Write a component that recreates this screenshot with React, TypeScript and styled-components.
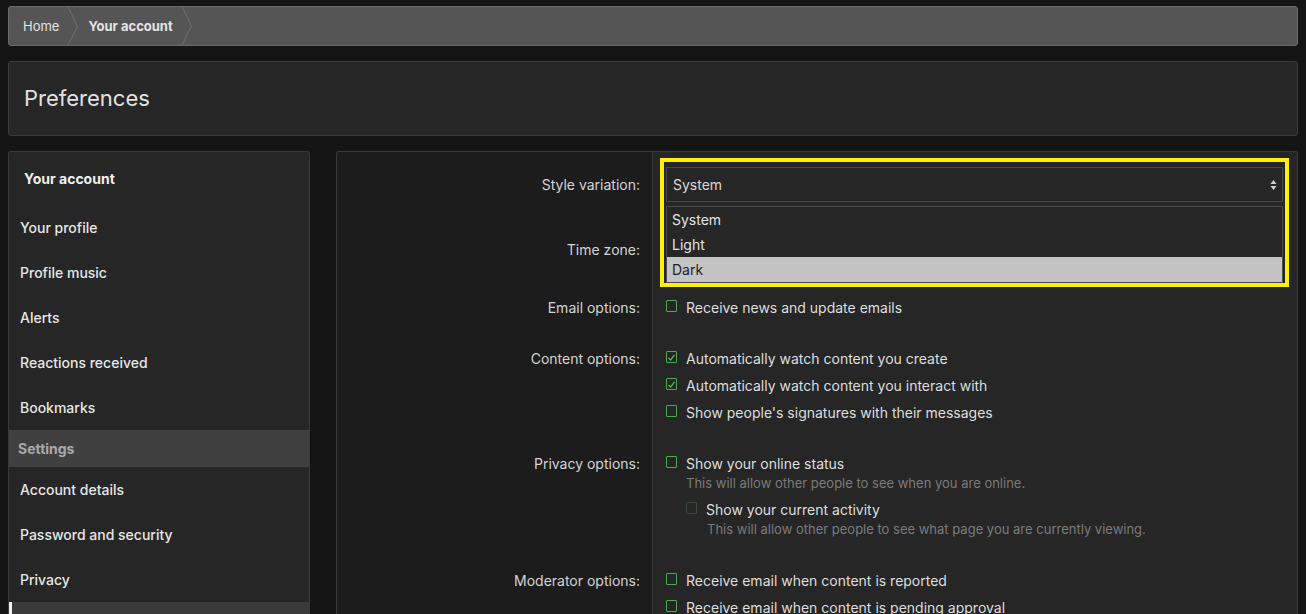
import React from "react";
import styled, { createGlobalStyle } from "styled-components";

const GlobalStyle = createGlobalStyle`
  html, body {
    margin: 0;
    padding: 0;
    background: #141414;
    font-family: Inter, "Noto Sans", "Liberation Sans", sans-serif;
    color: #dcdcdc;
    overflow: hidden;
  }
  * { box-sizing: border-box; }
`;

const Page = styled.div`
  padding: 6px 8px 0;
  display: flex;
  flex-direction: column;
  height: 614px;
`;

const Crumbs = styled.nav`
  height: 40px;
  flex: none;
  background: #555555;
  border: 1px solid #6b6b6b;
  border-radius: 3px;
  display: flex;
  align-items: stretch;
  font-size: 13px;
`;

const Crumb = styled.a<{ $strong?: boolean; $first?: boolean }>`
  display: flex;
  align-items: center;
  padding-left: ${(p) => (p.$first ? "14px" : "10px")};
  color: #e4e4e4;
  font-weight: ${(p) => (p.$strong ? 700 : 400)};
  text-decoration: none;
  svg {
    margin-left: 9px;
    height: 100%;
    flex: none;
  }
`;

const HeaderBox = styled.header`
  margin-top: 15px;
  height: 75px;
  flex: none;
  background: #262626;
  border: 1px solid #3c3c3c;
  border-radius: 3px;
  display: flex;
  align-items: center;
  padding: 0 15px;
`;

const Title = styled.h1`
  margin: 0 0 2px;
  font-size: 22px;
  font-weight: 400;
  color: #e2e2e2;
`;

const Body = styled.div`
  margin-top: 15px;
  display: flex;
  gap: 26px;
  flex: 1;
  min-height: 0;
`;

const Sidebar = styled.aside`
  width: 302px;
  flex: none;
  background: #262626;
  border: 1px solid #3a3a3a;
  border-bottom: none;
  border-radius: 3px 3px 0 0;
  display: flex;
  flex-direction: column;
  overflow: hidden;
`;

const SideHeading = styled.div`
  height: 53px;
  flex: none;
  padding: 16px 15px 0;
  font-size: 14px;
  font-weight: 700;
  color: #f0f0f0;
  line-height: 22px;
`;

const SideItem = styled.a<{ $active?: boolean }>`
  height: 45px;
  flex: none;
  display: flex;
  align-items: center;
  padding-left: ${(p) => (p.$active ? "8px" : "11px")};
  font-size: 14px;
  font-weight: 500;
  color: #e6e6e6;
  background: ${(p) => (p.$active ? "#3a3a3a" : "transparent")};
  border-left: ${(p) => (p.$active ? "3px solid #f2f2f2" : "none")};
`;

const SideSection = styled.div`
  height: 37px;
  flex: none;
  display: flex;
  align-items: center;
  padding-left: 9px;
  background: #404040;
  font-size: 14px;
  font-weight: 700;
  color: #a9a9a9;
`;

const Main = styled.section`
  flex: 1;
  border: 1px solid #393939;
  border-bottom: none;
  border-radius: 3px 3px 0 0;
  display: grid;
  grid-template-columns: 315px 1fr;
  background: linear-gradient(to right, #1c1c1c 315px, #262626 315px);
  align-content: start;
  padding-top: 15px;
  position: relative;
  overflow: hidden;
  &::before {
    content: "";
    position: absolute;
    left: 315px;
    top: 0;
    bottom: 0;
    width: 1px;
    background: #393939;
  }
`;

const Label = styled.div<{ $line: number; $gap: number }>`
  text-align: right;
  padding-right: 12px;
  font-size: 14px;
  color: #d4d4d4;
  line-height: ${(p) => p.$line}px;
  margin-bottom: ${(p) => p.$gap}px;
`;

const Field = styled.div<{ $gap: number }>`
  padding: 0 14px 0 14px;
  margin-bottom: ${(p) => p.$gap}px;
  display: flex;
  flex-direction: column;
`;

const SelectWrap = styled.div`
  position: relative;
`;

const SelectBox = styled.div`
  height: 35px;
  border: 1px solid #474747;
  background: #262626;
  display: flex;
  align-items: center;
  justify-content: space-between;
  padding: 0 5px 0 6px;
  font-size: 14px;
  color: #dadada;
`;

const OptionList = styled.ul`
  position: absolute;
  left: 0;
  right: 0;
  top: 39px;
  margin: 0;
  padding: 0;
  list-style: none;
  border: 1px solid #4a4a4a;
  background: #262626;
  z-index: 2;
`;

const Option = styled.li<{ $hover?: boolean }>`
  height: 25px;
  line-height: 25px;
  padding-left: 5px;
  font-size: 14px;
  color: ${(p) => (p.$hover ? "#1e1e1e" : "#e4e4e4")};
  background: ${(p) => (p.$hover ? "#c4c4c4" : "transparent")};
`;

const Highlight = styled.div`
  position: absolute;
  left: -6px;
  right: -6px;
  top: -9px;
  height: 129px;
  border: 4px solid #fff200;
  z-index: 3;
  pointer-events: none;
`;

const Check = styled.label<{ $sub?: boolean }>`
  display: flex;
  align-items: center;
  height: 27px;
  gap: 9px;
  font-size: 14px;
  color: #dedede;
  margin-top: ${(p) => (p.$sub ? "5px" : "0")};
  padding-left: ${(p) => (p.$sub ? "20px" : "0")};
`;

const Box = styled.span<{ $dim?: boolean }>`
  width: 11px;
  height: 12px;
  flex: none;
  border: 1px solid ${(p) => (p.$dim ? "#3b4a3b" : "#4fa653")};
  border-radius: 1px;
  display: flex;
  align-items: center;
  justify-content: center;
  margin-top: -3px;
`;

const Hint = styled.div<{ $sub?: boolean }>`
  font-size: 13px;
  line-height: 16px;
  margin-top: -2px;
  color: #7b7b7b;
  padding-left: ${(p) => (p.$sub ? "41px" : "20px")};
`;

const SubGroup = styled.div`
  padding-bottom: 6px;
`;

const Chevron = () => (
  <svg width="10" viewBox="0 0 10 40" preserveAspectRatio="none">
    <polyline points="0,0 9.5,20 0,40" fill="none" stroke="#707070" strokeWidth="1" />
  </svg>
);

const Arrows = () => (
  <svg width="7" height="12" viewBox="0 0 7 12">
    <polygon points="3.5,1 6.5,5 0.5,5" fill="#cfcfcf" />
    <polygon points="3.5,11 6.5,7 0.5,7" fill="#cfcfcf" />
  </svg>
);

const Tick = () => (
  <svg width="9" height="9" viewBox="0 0 9 9">
    <polyline points="1.5,4.8 3.6,7 7.5,1.8" fill="none" stroke="#5fbf63" strokeWidth="1.2" />
  </svg>
);

type Opt = { text: string; checked?: boolean };

const CheckRow = ({ text, checked, sub, dim }: Opt & { sub?: boolean; dim?: boolean }) => (
  <Check $sub={sub}>
    <Box $dim={dim}>{checked && <Tick />}</Box>
    <span>{text}</span>
  </Check>
);

const accountLinks = ["Your profile", "Profile music", "Alerts", "Reactions received", "Bookmarks"];
const settingsLinks = ["Account details", "Password and security", "Privacy"];

export default function App() {
  return (
    <>
      <GlobalStyle />
      <Page>
        <Crumbs>
          <Crumb $first>
            Home
            <Chevron />
          </Crumb>
          <Crumb $strong>
            Your account
            <Chevron />
          </Crumb>
        </Crumbs>

        <HeaderBox>
          <Title>Preferences</Title>
        </HeaderBox>

        <Body>
          <Sidebar>
            <SideHeading>Your account</SideHeading>
            {accountLinks.map((l) => (
              <SideItem key={l}>{l}</SideItem>
            ))}
            <SideSection>Settings</SideSection>
            {settingsLinks.map((l) => (
              <SideItem key={l}>{l}</SideItem>
            ))}
            <SideItem $active>Preferences</SideItem>
          </Sidebar>

          <Main>
            <Label $line={35} $gap={30}>Style variation:</Label>
            <Field $gap={30}>
              <SelectWrap>
                <SelectBox>
                  <span>System</span>
                  <Arrows />
                </SelectBox>
                <OptionList>
                  <Option>System</Option>
                  <Option>Light</Option>
                  <Option $hover>Dark</Option>
                </OptionList>
                <Highlight />
              </SelectWrap>
            </Field>

            <Label $line={35} $gap={27}>Time zone:</Label>
            <Field $gap={27}>
              <SelectBox>
                <Arrows />
              </SelectBox>
            </Field>

            <Label $line={27} $gap={24}>Email options:</Label>
            <Field $gap={24}>
              <CheckRow text="Receive news and update emails" />
            </Field>

            <Label $line={27} $gap={24}>Content options:</Label>
            <Field $gap={24}>
              <CheckRow text="Automatically watch content you create" checked />
              <CheckRow text="Automatically watch content you interact with" checked />
              <CheckRow text="Show people's signatures with their messages" />
            </Field>

            <Label $line={27} $gap={24}>Privacy options:</Label>
            <Field $gap={24}>
              <CheckRow text="Show your online status" />
              <Hint>This will allow other people to see when you are online.</Hint>
              <SubGroup>
                <CheckRow text="Show your current activity" sub dim />
                <Hint $sub>This will allow other people to see what page you are currently viewing.</Hint>
              </SubGroup>
            </Field>

            <Label $line={27} $gap={24}>Moderator options:</Label>
            <Field $gap={24}>
              <CheckRow text="Receive email when content is reported" />
              <CheckRow text="Receive email when content is pending approval" />
            </Field>
          </Main>
        </Body>
      </Page>
    </>
  );
}
